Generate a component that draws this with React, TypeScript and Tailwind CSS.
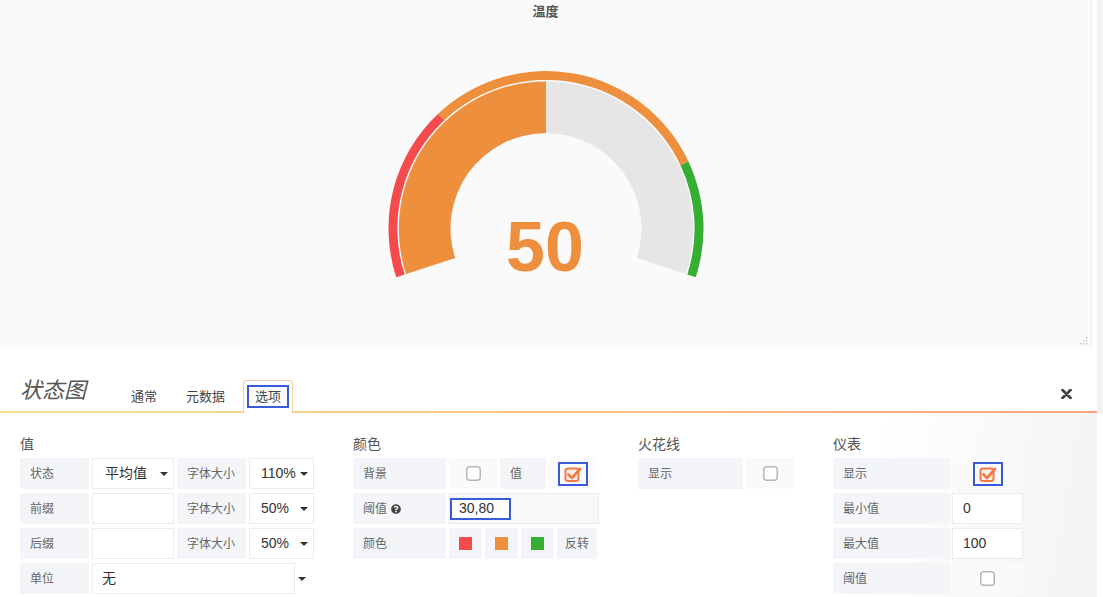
import React from "react";
import { FaQuestionCircle } from "react-icons/fa";

function sector(cx: number, cy: number, r0: number, r1: number, a0: number, a1: number) {
  const rad = (d: number) => (d * Math.PI) / 180;
  const p = (r: number, a: number) => [cx + r * Math.cos(rad(a)), cy + r * Math.sin(rad(a))];
  const large = a1 - a0 > 180 ? 1 : 0;
  const [x1, y1] = p(r1, a0);
  const [x2, y2] = p(r1, a1);
  const [x3, y3] = p(r0, a1);
  const [x4, y4] = p(r0, a0);
  return `M${x1} ${y1} A${r1} ${r1} 0 ${large} 1 ${x2} ${y2} L${x3} ${y3} A${r0} ${r0} 0 ${large} 0 ${x4} ${y4} Z`;
}

function Gauge() {
  const cx = 165;
  const cy = 160.5;
  const start = 162;
  const span = 216;
  const ang = (v: number) => start + (span * v) / 100;
  return (
    <svg width="330" height="220" viewBox="0 0 330 220">
      <path d={sector(cx, cy, 95.5, 147.1, ang(0), ang(100))} fill="#e6e6e6" />
      <path d={sector(cx, cy, 95.5, 147.1, ang(0), ang(50))} fill="#ee8f3d" />
      <path d={sector(cx, cy, 148.6, 157.5, ang(0), ang(30))} fill="#f54b4d" />
      <path d={sector(cx, cy, 148.6, 157.5, ang(30), ang(80))} fill="#ee8f3d" />
      <path d={sector(cx, cy, 148.6, 157.5, ang(80), ang(100))} fill="#36ae32" />
      <text
        x={cx - 1}
        y={202.5}
        textAnchor="middle"
        fontFamily="'Liberation Sans', Arial, sans-serif"
        fontWeight="bold"
        fontSize="70"
        fill="#ee8f3d"
      >
        50
      </text>
    </svg>
  );
}

const Caret = () => (
  <svg width="8" height="4" viewBox="0 0 8 4" className="shrink-0">
    <path d="M0 0 L8 0 L4 4 Z" fill="#333" />
  </svg>
);

const Unchecked = () => (
  <svg width="15" height="15" viewBox="0 0 15 15">
    <rect x="0.75" y="0.75" width="13.5" height="13.5" rx="3" fill="#fff" stroke="#b8b8b8" strokeWidth="1.5" />
  </svg>
);

const Checked = () => (
  <div className="border-2 border-[#3a5bd9] w-[30px] h-[24px] flex items-center justify-center">
    <svg width="18" height="16" viewBox="0 0 18 16">
      <rect x="1.5" y="2.5" width="13" height="12.5" rx="2.5" fill="#fff1ea" stroke="#f47b45" strokeWidth="2" />
      <path d="M4.5 8.5 L8 12 L16 3" fill="none" stroke="#f47b45" strokeWidth="2.8" strokeLinecap="round" strokeLinejoin="round" />
    </svg>
  </div>
);

function Label({ w, children }: { w: string; children: React.ReactNode }) {
  return (
    <div className={`${w} h-[31px] shrink-0 bg-[#f4f5f8] flex items-center pl-[10px] text-[12px] text-[#666]`}>
      {children}
    </div>
  );
}

function CbCell({ w, checked }: { w: string; checked?: boolean }) {
  return (
    <div className={`${w} h-[31px] shrink-0 bg-[#fafafa] flex items-center justify-center`}>
      {checked ? <Checked /> : <Unchecked />}
    </div>
  );
}

function Heading({ children }: { children: React.ReactNode }) {
  return <div className="text-[14px] leading-[14px] h-[14px] mb-[7px] text-[#555]">{children}</div>;
}

function Select({ w, text, pl }: { w: string; text: string; pl: string }) {
  return (
    <div className={`${w} h-[31px] shrink-0 bg-white border border-[#ececec] flex items-center ${pl} pr-[5px] text-[14px] text-[#333]`}>
      <span className="flex-1">{text}</span>
      <Caret />
    </div>
  );
}

function Input({ w, text }: { w: string; text?: string }) {
  return (
    <div className={`${w} h-[31px] shrink-0 bg-white border border-[#ececec] flex items-center pl-[10px] text-[14px] text-[#333]`}>
      {text}
    </div>
  );
}

const Swatch = ({ color }: { color: string }) => (
  <div className="w-[33px] h-[31px] shrink-0 bg-[#f4f5f8] flex items-center justify-center">
    <div className={`w-[13px] h-[13px] ${color}`} />
  </div>
);

export default function App() {
  return (
    <div className="w-[1103px] h-[597px] overflow-hidden flex bg-white font-['Liberation_Sans','Noto_Sans_CJK_SC',sans-serif]">
      <div className="w-[1097px] shrink-0 flex flex-col">
        {/* top panel */}
        <div className="flex h-[347px] shrink-0">
          <div className="w-[1092px] h-full bg-[#fafafa] border-r border-[#ececec] relative flex flex-col items-center">
            <div className="pt-[5px] text-[13px] leading-[14px] font-bold text-[#555]">温度</div>
            <div className="mt-[49px]">
              <Gauge />
            </div>
            <svg className="absolute right-[3px] bottom-[2px]" width="8" height="8" viewBox="0 0 8 8">
              <rect x="6" y="0" width="1.5" height="1.5" fill="#c8c8c8" />
              <rect x="3" y="3" width="1.5" height="1.5" fill="#c8c8c8" />
              <rect x="6" y="3" width="1.5" height="1.5" fill="#c8c8c8" />
              <rect x="0" y="6" width="1.5" height="1.5" fill="#c8c8c8" />
              <rect x="3" y="6" width="1.5" height="1.5" fill="#c8c8c8" />
              <rect x="6" y="6" width="1.5" height="1.5" fill="#c8c8c8" />
            </svg>
          </div>
          <div className="flex-1 bg-white" />
        </div>

        {/* header with tabs */}
        <div className="flex items-end h-[64px] shrink-0 pl-[20px] pr-[25px] bg-white">
          <div className="text-[22px] leading-[22px] italic text-[#555] mb-[9px]">状态图</div>
          <div className="ml-[45px] text-[13px] leading-[13px] text-[#444] mb-[8px]">通常</div>
          <div className="ml-[29px] text-[13px] leading-[13px] text-[#444] mb-[8px]">元数据</div>
          <div className="ml-[18px] relative z-10 -mb-[2px] bg-white border border-b-0 border-[#f6c9a0] rounded-t-[4px] px-[3px] pt-[4px] pb-[5px]">
            <div className="border-2 border-[#3a5bd9] px-[6px] py-[3px] text-[13px] leading-[13px] text-[#444]">选项</div>
          </div>
          <div className="ml-auto mb-[12px]">
            <svg width="11" height="10" viewBox="0 0 11 10">
              <path d="M1.5 1 L9.5 9 M9.5 1 L1.5 9" stroke="#444" strokeWidth="2.8" strokeLinecap="round" />
            </svg>
          </div>
        </div>
        <div className="h-[2px] shrink-0 bg-[linear-gradient(to_right,#fde28c,#f8a27f)]" />

        {/* options */}
        <div className="flex-1 flex pl-[20px] pt-[24px] bg-[linear-gradient(100deg,#ffffff_0%,#ffffff_78%,#f3f3f3_100%)]">
          {/* 值 */}
          <div className="w-[294px] shrink-0 flex flex-col">
            <Heading>值</Heading>
            <div className="flex flex-col gap-[4px]">
              <div className="flex gap-[3px]">
                <Label w="w-[69px]">状态</Label>
                <Select w="w-[82px]" text="平均值" pl="pl-[12px]" />
                <Label w="w-[69px]">字体大小</Label>
                <Select w="w-[65px]" text="110%" pl="pl-[11px]" />
              </div>
              <div className="flex gap-[3px]">
                <Label w="w-[69px]">前缀</Label>
                <Input w="w-[82px]" />
                <Label w="w-[69px]">字体大小</Label>
                <Select w="w-[65px]" text="50%" pl="pl-[11px]" />
              </div>
              <div className="flex gap-[3px]">
                <Label w="w-[69px]">后缀</Label>
                <Input w="w-[82px]" />
                <Label w="w-[69px]">字体大小</Label>
                <Select w="w-[65px]" text="50%" pl="pl-[11px]" />
              </div>
              <div className="flex gap-[3px] items-center">
                <Label w="w-[69px]">单位</Label>
                <div className="w-[203px] h-[31px] shrink-0 bg-white border border-[#ececec] flex items-center pl-[9px] text-[14px] text-[#333]">
                  无
                </div>
                <Caret />
              </div>
            </div>
          </div>

          {/* 颜色 */}
          <div className="ml-[39px] w-[246px] shrink-0 flex flex-col">
            <Heading>颜色</Heading>
            <div className="flex flex-col gap-[4px]">
              <div className="flex gap-[3px]">
                <Label w="w-[93px]">背景</Label>
                <CbCell w="w-[48px]" />
                <Label w="w-[46px]">值</Label>
                <CbCell w="w-[47px]" checked />
              </div>
              <div className="flex gap-[3px]">
                <Label w="w-[93px]">
                  <span>阈值</span>
                  <FaQuestionCircle className="ml-[4px] text-[#444]" size={10} />
                </Label>
                <div className="w-[150px] h-[31px] shrink-0 bg-[#f8f8f8] border border-[#ececec] flex items-center">
                  <div className="w-[61px] h-[22px] border-2 border-[#3a5bd9] bg-white flex items-center pl-[7px] text-[14px] text-[#333]">
                    30,80
                  </div>
                </div>
              </div>
              <div className="flex gap-[3px]">
                <Label w="w-[93px]">颜色</Label>
                <Swatch color="bg-[#f54b4d]" />
                <Swatch color="bg-[#ee8f3d]" />
                <Swatch color="bg-[#36ae32]" />
                <div className="w-[40px] h-[31px] shrink-0 bg-[#f4f5f8] flex items-center justify-center text-[12px] text-[#666]">
                  反转
                </div>
              </div>
            </div>
          </div>

          {/* 火花线 */}
          <div className="ml-[39px] w-[156px] shrink-0 flex flex-col">
            <Heading>火花线</Heading>
            <div className="flex gap-[3px]">
              <Label w="w-[105px]">显示</Label>
              <CbCell w="w-[48px]" />
            </div>
          </div>

          {/* 仪表 */}
          <div className="ml-[39px] w-[190px] shrink-0 flex flex-col">
            <Heading>仪表</Heading>
            <div className="flex flex-col gap-[4px]">
              <div className="flex gap-[2px]">
                <Label w="w-[117px]">显示</Label>
                <CbCell w="w-[71px]" checked />
              </div>
              <div className="flex gap-[2px]">
                <Label w="w-[117px]">最小值</Label>
                <Input w="w-[71px]" text="0" />
              </div>
              <div className="flex gap-[2px]">
                <Label w="w-[117px]">最大值</Label>
                <Input w="w-[71px]" text="100" />
              </div>
              <div className="flex gap-[2px]">
                <Label w="w-[117px]">阈值</Label>
                <CbCell w="w-[71px]" />
              </div>
            </div>
          </div>
        </div>
      </div>
      <div className="flex-1 flex flex-col">
        <div className="h-[413px] bg-[#f2f2f2]" />
        <div className="flex-1 bg-white" />
      </div>
    </div>
  );
}
